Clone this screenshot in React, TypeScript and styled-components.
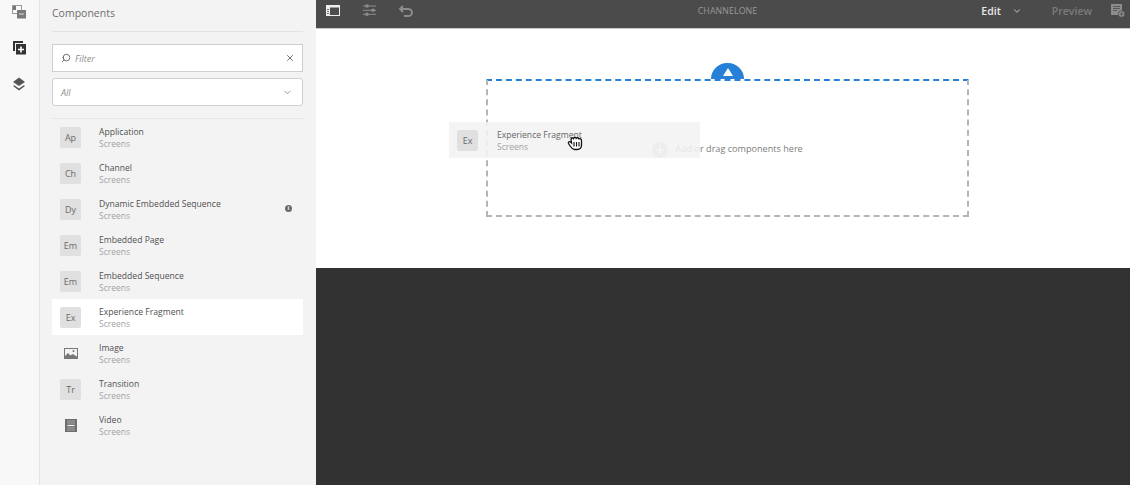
import * as React from "react";
import styled, { createGlobalStyle } from "styled-components";
import { ChevronDown, Search, X } from "lucide-react";

const font = `"Open Sans", "Noto Sans", "Liberation Sans", sans-serif`;

const GlobalStyle = createGlobalStyle`
  html, body { margin: 0; padding: 0; height: 100%; overflow: hidden; }
  body { font-family: ${font}; background: #fff; }
  * { box-sizing: border-box; }
`;

const Page = styled.div`
  width: 1130px;
  height: 485px;
  display: flex;
  position: relative;
  overflow: hidden;
`;

const Rail = styled.div`
  width: 40px;
  flex: none;
  background: #f8f8f8;
  border-right: 1px solid #e4e4e4;
  display: flex;
  flex-direction: column;
  align-items: center;
  padding-top: 4px;
  padding-right: 1px;
  gap: 20px;
`;

const RailIcon = styled.svg`
  width: 16px;
  height: 16px;
  display: block;
`;

const SidePanel = styled.div`
  width: 276px;
  flex: none;
  background: #f3f3f3;
  padding: 0 13px 0 12px;
  display: flex;
  flex-direction: column;
`;

const PanelTitle = styled.div`
  height: 32px;
  border-bottom: 1px solid #e2e2e2;
  font-size: 10.5px;
  line-height: 27px;
  color: #6e6e6e;
`;

const FilterBox = styled.div`
  margin-top: 12px;
  height: 28px;
  background: #fff;
  border: 1px solid #d0d0d0;
  display: flex;
  align-items: center;
  padding: 0 7px 0 8px;
  color: #444;
`;

const Hint = styled.span`
  font-size: 9px;
  font-style: italic;
  color: #8e8e8e;
  flex: 1;
`;

const FilterHint = styled(Hint)`
  margin-left: 4px;
`;

const SelectBox = styled.div`
  margin-top: 6px;
  height: 28px;
  background: #fff;
  border: 1px solid #d0d0d0;
  border-radius: 3px;
  display: flex;
  align-items: center;
  padding: 0 9px 0 8px;
  color: #777;
`;

const ListRule = styled.div`
  margin-top: 12px;
  height: 1px;
  background: #e6e6e6;
`;

const Row = styled.div<{ $active?: boolean }>`
  height: 36px;
  display: flex;
  align-items: center;
  padding: 0 8px;
  background: ${p => (p.$active ? "#fff" : "transparent")};
  position: relative;
`;

const Badge = styled.div`
  width: 21px;
  height: 21px;
  flex: none;
  border-radius: 2px;
  background: #e0e0e0;
  color: #6a6a6a;
  font-size: 9px;
  display: flex;
  align-items: center;
  justify-content: center;
`;

const IconSlot = styled.div`
  width: 21px;
  height: 21px;
  flex: none;
  display: flex;
  align-items: center;
  justify-content: center;
`;

const RowText = styled.div`
  margin: 2px 0 0 18px;
  display: flex;
  flex-direction: column;
  flex: 1;
`;

const GhostText = styled(RowText)`
  margin-left: 19px;
`;

const RowName = styled.span`
  font-size: 8.6px;
  line-height: 12px;
  color: #505050;
`;

const RowSub = styled.span`
  font-size: 8.5px;
  line-height: 12px;
  color: #a3a3a3;
`;

const InfoDot = styled.div`
  width: 7px;
  height: 7px;
  border-radius: 50%;
  background: #6a6a6a;
  margin: 0 3px 2px 0;
  display: flex;
  align-items: center;
  justify-content: center;
  color: #f3f3f3;
  font-size: 6px;
  font-weight: 700;
  line-height: 7px;
`;

const Main = styled.div`
  flex: 1;
  display: flex;
  flex-direction: column;
  background: #323232;
`;

const TopBar = styled.div`
  height: 29px;
  flex: none;
  background: #4b4b4b;
  border-bottom: 1px solid #c9c9c9;
  display: grid;
  grid-template-columns: 1fr auto 1fr;
  align-items: center;
  padding: 0 4px 6px 9px;
`;

const BarGroup = styled.div`
  display: flex;
  align-items: center;
`;

const BarRight = styled(BarGroup)`
  justify-content: flex-end;
`;

const ToolIcon = styled.svg`
  width: 16px;
  height: 16px;
  display: block;
`;

const ToolGap = styled.div<{ $w: number }>`
  width: ${p => p.$w}px;
`;

const PageName = styled.div`
  font-size: 8.8px;
  color: #999;
  letter-spacing: 0.1px;
  margin-left: 4px;
`;

const EditLabel = styled.span`
  font-size: 10.5px;
  font-weight: 600;
  color: #e8e8e8;
`;

const PreviewLabel = styled.span`
  font-size: 10.5px;
  font-weight: 600;
  color: #7b7b7b;
`;

const Canvas = styled.div`
  height: 239px;
  flex: none;
  background: #fff;
  display: flex;
  justify-content: center;
  padding: 50px 0 0 9px;
`;

const DropZone = styled.div`
  width: 483px;
  height: 138px;
  border: 2px dashed #b5b5b5;
  border-top-color: #2680d8;
  position: relative;
  display: flex;
  align-items: center;
  justify-content: center;
  gap: 7px;
`;

const InsertTab = styled.div`
  position: absolute;
  left: 223px;
  top: -18px;
  width: 33px;
  height: 16px;
  border-radius: 17px 17px 0 0;
  background: #2680d8;
  display: flex;
  justify-content: center;
  padding-top: 5px;
`;

const Triangle = styled.div`
  width: 0;
  height: 0;
  border-left: 5px solid transparent;
  border-right: 5px solid transparent;
  border-bottom: 8px solid #fff;
`;

const PlusBadge = styled.svg`
  width: 16px;
  height: 16px;
  margin-top: 3px;
`;

const Placeholder = styled.span`
  font-size: 9.1px;
  color: #7d7d7d;
`;

const Ghost = styled.div`
  position: absolute;
  left: 449px;
  top: 122px;
  width: 251px;
  height: 36px;
  padding: 0 8px;
  display: flex;
  align-items: center;
  background: rgba(243, 243, 243, 0.88);
`;

const GhostName = styled(RowName)`
  color: #666;
`;

const Grab = styled.svg`
  position: absolute;
  left: 567px;
  top: 134px;
  width: 16px;
  height: 17px;
`;

type Item = { code?: string; name: string; icon?: "image" | "video"; info?: boolean };

const items: Item[] = [
  { code: "Ap", name: "Application" },
  { code: "Ch", name: "Channel" },
  { code: "Dy", name: "Dynamic Embedded Sequence", info: true },
  { code: "Em", name: "Embedded Page" },
  { code: "Em", name: "Embedded Sequence" },
  { code: "Ex", name: "Experience Fragment" },
  { name: "Image", icon: "image" },
  { code: "Tr", name: "Transition" },
  { name: "Video", icon: "video" },
];

const ImageGlyph = () => (
  <svg width="14" height="11" viewBox="0 0 14 11">
    <rect x="0" y="0" width="14" height="11" fill="#777" />
    <rect x="1" y="1" width="12" height="8" fill="#f3f3f3" />
    <circle cx="9.500" cy="3" r="1" fill="#777" />
    <path d="M1 9 L1 8 L4 5 L6.500 7.500 L8.500 6 L13 8.500 L13 9 Z" fill="#777" />
  </svg>
);

const VideoGlyph = () => (
  <svg width="12" height="13" viewBox="0 0 12 13">
    <rect x="0" y="0" width="12" height="13" fill="#6e6e6e" />
    <rect x="2" y="1" width="8" height="4.600" fill="#8a8a8a" />
    <rect x="2" y="7.400" width="8" height="4.600" fill="#8a8a8a" />
    <rect x="2.500" y="6" width="7" height="1" fill="#f3f3f3" />
  </svg>
);

export default function App() {
  return (
    <Page>
      <GlobalStyle />
      <Rail>
        <RailIcon viewBox="0 0 16 16">
          <rect x="1.500" y="1.500" width="9" height="8" fill="#f8f8f8" stroke="#999" />
          <rect x="2" y="2" width="3" height="4" fill="#777" />
          <rect x="6" y="6" width="9" height="8.500" fill="#7a7a7a" />
          <path d="M8 10h5" stroke="#ddd" strokeWidth="1" />
        </RailIcon>
        <RailIcon viewBox="0 0 16 16">
          <path d="M2 1h10v2H4v8H2z" fill="#333" />
          <rect x="5" y="4" width="10" height="10.500" fill="#333" />
          <path d="M10 6.500v6M7 9.500h6" stroke="#fff" strokeWidth="1.600" />
        </RailIcon>
        <RailIcon viewBox="0 0 16 16">
          <path d="M8 1.500 L14 6 L8 10 L2 6 Z" fill="#555" />
          <path d="M3.200 9.200 L8 12.400 L12.800 9.200 L14 10 L8 14.500 L2 10 Z" fill="#555" />
        </RailIcon>
      </Rail>

      <SidePanel>
        <PanelTitle>Components</PanelTitle>
        <FilterBox>
          <Search size={10} strokeWidth={1.8} style={{ transform: "scaleX(-1)" }} />
          <FilterHint>Filter</FilterHint>
          <X size={10} strokeWidth={1.8} />
        </FilterBox>
        <SelectBox>
          <Hint>All</Hint>
          <ChevronDown size={11} strokeWidth={1.6} />
        </SelectBox>
        <ListRule />
        {items.map(item => (
          <Row key={item.name} $active={item.name === "Experience Fragment"}>
            {item.code ? (
              <Badge>{item.code}</Badge>
            ) : (
              <IconSlot>{item.icon === "image" ? <ImageGlyph /> : <VideoGlyph />}</IconSlot>
            )}
            <RowText>
              <RowName>{item.name}</RowName>
              <RowSub>Screens</RowSub>
            </RowText>
            {item.info && <InfoDot>i</InfoDot>}
          </Row>
        ))}
      </SidePanel>

      <Main>
        <TopBar>
          <BarGroup>
            <ToolIcon viewBox="0 0 16 16">
              <rect x="1.500" y="2.500" width="13" height="10" fill="none" stroke="#eee" strokeWidth="1" />
              <rect x="1" y="2" width="14" height="2.500" fill="#eee" />
              <rect x="1" y="4" width="4" height="9" fill="#eee" />
              <path d="M2 6.500h2M2 8.500h2M2 10.500h2" stroke="#555" strokeWidth="0.800" />
            </ToolIcon>
            <ToolGap $w={20} />
            <ToolIcon viewBox="0 0 16 16">
              <path d="M2 3h13M2 7.300h13M2 11.300h13" stroke="#8c8c8c" strokeWidth="1" />
              <circle cx="6" cy="3" r="1.800" fill="#8c8c8c" />
              <circle cx="12" cy="7.300" r="1.800" fill="#8c8c8c" />
              <circle cx="6" cy="11.300" r="1.800" fill="#8c8c8c" />
            </ToolIcon>
            <ToolGap $w={21} />
            <ToolIcon viewBox="0 0 16 16">
              <path
                d="M5 3 L2 6 L5 9 M2.500 6 H10 C12.500 6 14 7.500 14 9.500 C14 11.500 12.500 13 10 13 H6"
                fill="none"
                stroke="#8c8c8c"
                strokeWidth="1.900"
              />
            </ToolIcon>
          </BarGroup>
          <PageName>CHANNELONE</PageName>
          <BarRight>
            <EditLabel>Edit</EditLabel>
            <ToolGap $w={11} />
            <ChevronDown size={10} color="#ddd" strokeWidth={2} />
            <ToolGap $w={30} />
            <PreviewLabel>Preview</PreviewLabel>
            <ToolGap $w={18} />
            <ToolIcon viewBox="0 0 16 16">
              <path d="M1 1h11v7.500H8.500V12H1z" fill="#8c8c8c" />
              <path d="M3 3.500h7M3 5.500h7M3 7.500h4" stroke="#4b4b4b" strokeWidth="0.800" />
              <circle cx="11.500" cy="11" r="3.200" fill="#8c8c8c" stroke="#4b4b4b" strokeWidth="0.600" />
              <path d="M11.500 9.500v3M10 11h3" stroke="#4b4b4b" strokeWidth="0.800" />
            </ToolIcon>
          </BarRight>
        </TopBar>
        <Canvas>
          <DropZone>
            <InsertTab>
              <Triangle />
            </InsertTab>
            <PlusBadge viewBox="0 0 16 16">
              <circle cx="8" cy="8" r="8" fill="#c4c4c4" />
              <path d="M8 4v8M4 8h8" stroke="#fff" strokeWidth="2" />
            </PlusBadge>
            <Placeholder>Add or drag components here</Placeholder>
          </DropZone>
        </Canvas>
      </Main>

      <Ghost>
        <Badge>Ex</Badge>
        <GhostText>
          <GhostName>Experience Fragment</GhostName>
          <RowSub>Screens</RowSub>
        </GhostText>
      </Ghost>
      <Grab viewBox="0 0 16 17">
        <path
          d="M4 5.500 C4.500 3.500 6 3.800 6.500 4.500 C7 2.800 8.800 3 9.200 4.300 C10 3.200 11.500 3.500 11.800 4.800 C13 4.300 14.500 5 14.500 6.500 L14.500 11 C14.500 14 12.500 15.500 10 15.500 L7.500 15.500 C5.500 15.500 4.500 14 3.500 12.500 L1.500 9.500 C1 8.500 2 7 3.500 8 L4.500 9 Z"
          fill="#fff"
          stroke="#111"
          strokeWidth="1.300"
        />
        <path d="M7 8v4.500M9.500 8v4.500M12 8v4.500" stroke="#111" strokeWidth="1.100" />
      </Grab>
    </Page>
  );
}
